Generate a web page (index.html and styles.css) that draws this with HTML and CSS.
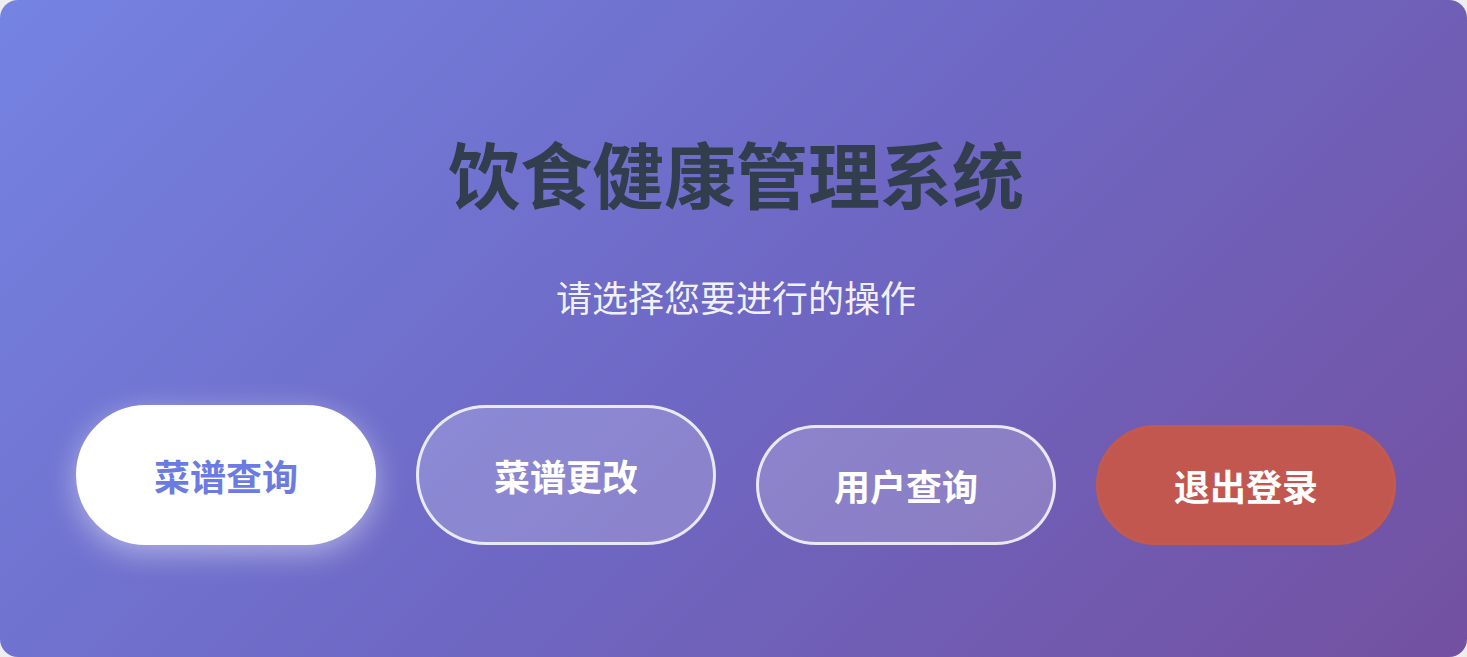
FILE: index.html
```html
<!DOCTYPE html>
<html lang="zh-CN">
<head>
<meta charset="UTF-8">
<title>饮食健康管理系统</title>
<link rel="stylesheet" href="styles.css">
</head>
<body>
<div class="card">
  <h1 class="title">饮食健康管理系统</h1>
  <p class="subtitle">请选择您要进行的操作</p>
  <div class="actions">
    <button class="btn btn-primary">菜谱查询</button>
    <button class="btn btn-ghost btn-tall">菜谱更改</button>
    <button class="btn btn-ghost">用户查询</button>
    <button class="btn btn-danger">退出登录</button>
  </div>
</div>
</body>
</html>
```

FILE: styles.css
```css
html, body {
  margin: 0;
  padding: 0;
  background: #eeeeee;
  overflow: hidden;
}

body {
  font-family: "Noto Sans CJK SC", "Noto Sans", sans-serif;
}

.card {
  box-sizing: border-box;
  width: 1467px;
  height: 657px;
  border-radius: 18px;
  background: linear-gradient(135deg, #7583e2 0%, #6e68c4 50%, #7350a0 100%);
  padding: 129px 0 0 5px;
  display: flex;
  flex-direction: column;
  align-items: center;
}

.title {
  margin: 0;
  font-size: 72px;
  line-height: 86px;
  font-weight: 700;
  color: #323d4d;
  letter-spacing: 0;
}

.subtitle {
  margin: 60px 0 0;
  font-size: 36px;
  line-height: 43px;
  font-weight: 400;
  color: rgba(255, 255, 255, 0.92);
}

.actions {
  margin-top: 87px;
  display: flex;
  align-items: flex-end;
  gap: 40px;
}

.btn {
  box-sizing: border-box;
  width: 300px;
  height: 120px;
  border-radius: 70px;
  font-family: inherit;
  font-size: 36px;
  font-weight: 700;
  border: 3px solid transparent;
  color: #ffffff;
  cursor: pointer;
  padding: 0;
}

.btn-primary {
  height: 140px;
  background: #ffffff;
  border-color: #ffffff;
  color: #6c7be2;
  box-shadow: 0 8px 30px rgba(255, 255, 255, 0.45);
}

.btn-ghost {
  background: rgba(255, 255, 255, 0.2);
  border-color: rgba(255, 255, 255, 0.82);
}

.btn-tall {
  height: 140px;
}

.btn-danger {
  background: #c1574f;
  border-color: #c45a4e;
}
```
